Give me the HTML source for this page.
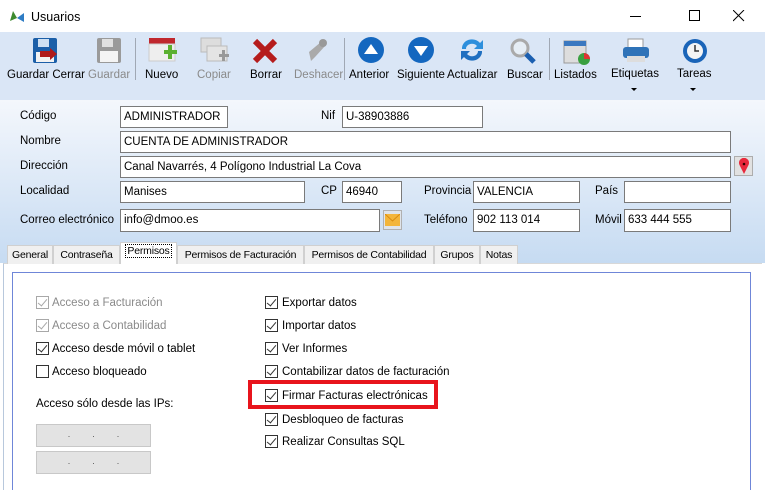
<!DOCTYPE html><html><head><meta charset="utf-8"><style>
*{margin:0;padding:0;box-sizing:border-box}
html,body{width:765px;height:490px;overflow:hidden}
body{background:#fff;font-family:"Liberation Sans",sans-serif;font-size:11px;color:#000;position:relative}
.a{position:absolute}
.tb{left:0;top:32px;width:765px;height:68px;background:#dae6f6}
.lbl{position:absolute;top:69px;font-size:11.5px;white-space:nowrap;color:#000}
.dis{color:#8a8a8a}
.form{left:0;top:100px;width:765px;height:163px;background:linear-gradient(#f4f7fc,#c6dbf2)}
.inp{position:absolute;background:#fff;border:1px solid #7a7a7a;height:22px;padding:3px 3px 0;line-height:15px;font-size:11.5px;white-space:nowrap}
.fl{position:absolute;font-size:11.5px}
.tab{position:absolute;top:245px;height:19px;background:#f0f0f0;border:1px solid #d0d0d0;border-bottom:none;font-size:10.5px;padding:3px 0 0;text-align:center;white-space:nowrap;overflow:hidden;letter-spacing:-0.2px}
.cb{position:absolute;width:13px;height:13px;border:1px solid #333;background:#fff}
.cb::after{content:"";position:absolute;left:3px;top:0px;width:4px;height:8px;border:solid #333;border-width:0 1.5px 1.5px 0;transform:rotate(40deg)}
.cb.g{border-color:#a8a8a8}.cb.g::after{border-color:#a8a8a8}
.cb.e::after{display:none}
.ct{position:absolute;font-size:11.5px;white-space:nowrap;margin-top:1px}
.sep{position:absolute;top:38px;width:1px;height:42px;background:#a0a8b4}
</style></head><body>
<div class="a" style="left:0;top:0;width:765px;height:32px;background:#fff"></div>
<svg class="a" style="left:9px;top:9px" width="16" height="14"><path d="M1 12 L4 2 L8 9Z" fill="#3d8a2e"/><path d="M15 4 L8 9 L15 13Z" fill="#2e7cc4"/></svg>
<div class="a" style="left:31px;top:10px;font-size:12.5px">Usuarios</div>
<div class="a" style="left:630px;top:16px;width:11px;height:1px;background:#000"></div>
<div class="a" style="left:689px;top:10px;width:11px;height:11px;border:1px solid #000"></div>
<svg class="a" style="left:733px;top:10px" width="12" height="12"><path d="M0 0L11 11M11 0L0 11" stroke="#000" stroke-width="1"/></svg>
<div class="a tb"></div>
<svg class="a" style="left:32px;top:37px" width="28" height="28"><rect x="1" y="1" width="24" height="25" rx="2" fill="#1c5fa8"/><rect x="6" y="2" width="11" height="8" fill="#cfe0f2"/><rect x="4" y="15" width="18" height="10" fill="#f2f2f2"/><path d="M8 14h10v-3l7 6-7 6v-3H8z" fill="#b01a1a"/></svg>
<svg class="a" style="left:96px;top:37px" width="28" height="28"><rect x="1" y="1" width="24" height="25" rx="2" fill="#9a9a9a"/><rect x="6" y="2" width="11" height="8" fill="#e0e0e0"/><rect x="4" y="14" width="18" height="11" fill="#f4f4f4"/></svg>
<svg class="a" style="left:148px;top:37px" width="30" height="28"><rect x="1" y="1" width="26" height="6" fill="#c0272d"/><rect x="1" y="7" width="26" height="17" fill="#eee" stroke="#ccc"/><path d="M16 13h4v-5h4v5h5v4h-5v5h-4v-5h-4z" fill="#5bb030"/></svg>
<svg class="a" style="left:200px;top:37px" width="30" height="28"><rect x="1" y="1" width="20" height="14" fill="#ddd" stroke="#bbb"/><rect x="7" y="9" width="20" height="15" fill="#e4e4e4" stroke="#bbb"/><path d="M19 17h3v-4h3v4h4v3h-4v4h-3v-4h-3z" fill="#999"/></svg>
<svg class="a" style="left:252px;top:38px" width="26" height="26"><path d="M3 3L23 23M23 3L3 23" stroke="#b51c1c" stroke-width="6"/></svg>
<svg class="a" style="left:303px;top:37px" width="28" height="28"><path d="M8 24 L6 15 L18 5 L22 9 L12 20z" fill="#aaa"/><circle cx="20" cy="6" r="4" fill="#999"/></svg>
<div class="sep" style="left:135px"></div><div class="sep" style="left:344px"></div><div class="sep" style="left:549px"></div>
<svg class="a" style="left:357px;top:36px" width="28" height="28"><circle cx="14" cy="14" r="13" fill="#1467bf"/><path d="M7 18h14L14 8z" fill="#fff"/></svg>
<svg class="a" style="left:407px;top:36px" width="28" height="28"><circle cx="14" cy="14" r="13" fill="#1467bf"/><path d="M7 10h14L14 20z" fill="#fff"/></svg>
<svg class="a" style="left:458px;top:37px" width="28" height="26"><path d="M4 12 A10 9 0 0 1 22 6 L25 3 V12 H16 L19 9 A6 5 0 0 0 8 12z" fill="#2d8fdc"/><path d="M24 14 A10 9 0 0 1 6 20 L3 23 V14 H12 L9 17 A6 5 0 0 0 20 14z" fill="#1f6fc0"/></svg>
<svg class="a" style="left:509px;top:37px" width="28" height="28"><circle cx="11" cy="11" r="8" fill="#e6eef6" stroke="#aaa" stroke-width="3"/><path d="M17 17L25 25" stroke="#1b5fb0" stroke-width="5"/></svg>
<svg class="a" style="left:561px;top:37px" width="30" height="28"><rect x="3" y="4" width="22" height="22" fill="#ddd" stroke="#999"/><rect x="3" y="4" width="22" height="5" fill="#3a78c0"/><circle cx="23" cy="22" r="6" fill="#3aa040"/><path d="M23 22V16A6 6 0 0 1 29 22z" fill="#d33"/></svg>
<svg class="a" style="left:621px;top:37px" width="30" height="28"><rect x="7" y="2" width="15" height="9" fill="#fff" stroke="#999"/><rect x="2" y="10" width="26" height="11" rx="3" fill="#2f73b8"/><rect x="6" y="19" width="18" height="6" fill="#ddd"/></svg>
<svg class="a" style="left:680px;top:36px" width="30" height="30"><circle cx="15" cy="15" r="12" fill="#1a64b8"/><circle cx="15" cy="15" r="8" fill="#f4f4f4"/><path d="M15 9v6h4" stroke="#333" stroke-width="1.5" fill="none"/></svg>
<div class="lbl" style="left:7px">Guardar Cerrar</div>
<div class="lbl dis" style="left:88px">Guardar</div>
<div class="lbl" style="left:145px">Nuevo</div>
<div class="lbl dis" style="left:197px">Copiar</div>
<div class="lbl" style="left:250px">Borrar</div>
<div class="lbl dis" style="left:294px">Deshacer</div>
<div class="lbl" style="left:349px">Anterior</div>
<div class="lbl" style="left:397px">Siguiente</div>
<div class="lbl" style="left:447px">Actualizar</div>
<div class="lbl" style="left:507px">Buscar</div>
<div class="lbl" style="left:554px">Listados</div>
<div class="lbl" style="left:611px;top:68px">Etiquetas</div>
<div class="lbl" style="left:677px;top:68px">Tareas</div>
<svg class="a" style="left:631px;top:88px" width="6" height="4"><path d="M0 0h6L3 3z" fill="#000"/></svg>
<svg class="a" style="left:690px;top:88px" width="6" height="4"><path d="M0 0h6L3 3z" fill="#000"/></svg>
<div class="a form"></div>
<div class="fl" style="left:20px;top:110px">Código</div>
<div class="inp" style="left:120px;top:106px;width:108px">ADMINISTRADOR</div>
<div class="fl" style="left:321px;top:110px">Nif</div>
<div class="inp" style="left:342px;top:106px;width:141px">U-38903886</div>
<div class="fl" style="left:20px;top:135px">Nombre</div>
<div class="inp" style="left:120px;top:131px;width:611px">CUENTA DE ADMINISTRADOR</div>
<div class="fl" style="left:20px;top:160px">Dirección</div>
<div class="inp" style="left:120px;top:156px;width:611px">Canal Navarrés, 4 Polígono Industrial La Cova</div>
<div class="a" style="left:734px;top:156px;width:19px;height:20px;background:#e1e1e1;border:1px solid #adadad"></div>
<svg class="a" style="left:738px;top:158px" width="12" height="17"><path d="M6 16 L1.5 7 A5 5 0 1 1 10.5 7z" fill="#e8283c"/><circle cx="6" cy="6" r="1.3" fill="#300"/></svg>
<div class="fl" style="left:20px;top:185px">Localidad</div>
<div class="inp" style="left:120px;top:181px;width:185px">Manises</div>
<div class="fl" style="left:321px;top:185px">CP</div>
<div class="inp" style="left:342px;top:181px;width:60px">46940</div>
<div class="fl" style="left:424px;top:185px">Provincia</div>
<div class="inp" style="left:473px;top:181px;width:107px">VALENCIA</div>
<div class="fl" style="left:595px;top:185px">País</div>
<div class="inp" style="left:624px;top:181px;width:107px"></div>
<div class="fl" style="left:20px;top:214px">Correo electrónico</div>
<div class="inp" style="left:120px;top:209px;width:260px;height:23px">info@dmoo.es</div>
<div class="a" style="left:383px;top:210px;width:19px;height:20px;background:#dfe4ea;border:1px solid #b0b0b0"></div>
<svg class="a" style="left:385px;top:214px" width="15" height="12"><rect width="15" height="12" fill="#f3b53a"/><path d="M0 0L7.5 7L15 0" stroke="#d88a10" fill="none"/></svg>
<div class="fl" style="left:424px;top:214px">Teléfono</div>
<div class="inp" style="left:473px;top:209px;width:107px;height:23px">902 113 014</div>
<div class="fl" style="left:595px;top:214px">Móvil</div>
<div class="inp" style="left:624px;top:209px;width:107px;height:23px">633 444 555</div>
<div class="a" style="left:3px;top:263px;width:759px;height:227px;background:#fff;border-left:1px solid #b8c8dc;border-top:1px solid #d8d8d8"></div>
<div class="a" style="left:12px;top:272px;width:739px;height:230px;border:1px solid #6f86d8"></div>
<div class="tab" style="left:7px;width:46px">General</div>
<div class="tab" style="left:53px;width:67px">Contraseña</div>
<div class="tab" style="left:120px;top:242px;height:22px;width:57px;background:#fff;padding-top:2px"><span style="border:1px dotted #000;padding:0 1px">Permisos</span></div>
<div class="tab" style="left:177px;width:127px">Permisos de Facturación</div>
<div class="tab" style="left:304px;width:130px">Permisos de Contabilidad</div>
<div class="tab" style="left:434px;width:46px">Grupos</div>
<div class="tab" style="left:480px;width:38px">Notas</div>
<div class="cb g" style="left:36px;top:296px"></div><div class="ct dis" style="left:52px;top:296px">Acceso a Facturación</div>
<div class="cb g" style="left:36px;top:319px"></div><div class="ct dis" style="left:52px;top:319px">Acceso a Contabilidad</div>
<div class="cb" style="left:36px;top:342px"></div><div class="ct" style="left:52px;top:342px">Acceso desde móvil o tablet</div>
<div class="cb e" style="left:36px;top:365px"></div><div class="ct" style="left:52px;top:365px">Acceso bloqueado</div>
<div class="ct" style="left:36px;top:397px">Acceso sólo desde las IPs:</div>
<div class="a" style="left:36px;top:424px;width:115px;height:23px;background:#e3e3e3;border:1px solid #c8c8c8;text-align:center;font-size:9px;color:#555;letter-spacing:22px;padding-left:22px;line-height:18px">...</div>
<div class="a" style="left:36px;top:451px;width:115px;height:23px;background:#e3e3e3;border:1px solid #c8c8c8;text-align:center;font-size:9px;color:#555;letter-spacing:22px;padding-left:22px;line-height:18px">...</div>
<div class="cb" style="left:265px;top:296px"></div><div class="ct" style="left:282px;top:296px">Exportar datos</div>
<div class="cb" style="left:265px;top:319px"></div><div class="ct" style="left:282px;top:319px">Importar datos</div>
<div class="cb" style="left:265px;top:342px"></div><div class="ct" style="left:282px;top:342px">Ver Informes</div>
<div class="cb" style="left:265px;top:365px"></div><div class="ct" style="left:282px;top:365px">Contabilizar datos de facturación</div>
<div class="a" style="left:248px;top:380px;width:190px;height:29px;border:4px solid #e8141c"></div>
<div class="cb" style="left:265px;top:389px"></div><div class="ct" style="left:282px;top:389px">Firmar Facturas electrónicas</div>
<div class="cb" style="left:265px;top:413px"></div><div class="ct" style="left:282px;top:413px">Desbloqueo de facturas</div>
<div class="cb" style="left:265px;top:435px"></div><div class="ct" style="left:282px;top:435px">Realizar Consultas SQL</div>
</body></html>
